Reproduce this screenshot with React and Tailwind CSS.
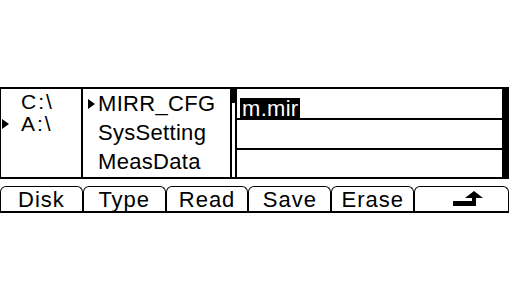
function Tri({ className }) {
  return (
    <svg className={className} width="7" height="10" viewBox="0 0 7 10">
      <path d="M0 0 L7 5 L0 10 Z" fill="currentColor" />
    </svg>
  )
}

function ReturnIcon() {
  return (
    <svg width="30" height="16" viewBox="0 0 30 16">
      <path d="M0 10 H19 V7 H23 V15 H0 Z" fill="black" />
      <path d="M12 7 L21 0 L30 7 Z" fill="black" />
    </svg>
  )
}

const softkeys = ['Disk', 'Type', 'Read', 'Save', 'Erase']

export default function App() {
  return (
    <div className="w-[509px] h-[298px] bg-white overflow-hidden text-black font-['Liberation_Sans',Arial,sans-serif]">
      <div className="pt-[87px]">
        {/* file browser panels */}
        <div className="flex h-[92px] border-t-2 border-b-2 border-l border-black border-r-[7px]">
          {/* drives */}
          <div className="w-[82px] border-r-2 border-black pt-[2px] text-[21px] leading-[22px] tracking-[2px]">
            <div className="flex items-center">
              <span className="w-[20px]" />
              <span>C:\</span>
            </div>
            <div className="flex items-center">
              <span className="w-[20px] flex pl-[1px]">
                <Tri className="text-black" />
              </span>
              <span>A:\</span>
            </div>
          </div>

          {/* folders */}
          <div className="w-[147px] text-[22px] leading-[29px] tracking-[0.3px]">
            <div className="flex items-center">
              <span className="w-[15px] flex pl-[5px]">
                <Tri />
              </span>
              <span>MIRR_CFG</span>
            </div>
            <div className="pl-[15px]">SysSetting</div>
            <div className="pl-[15px]">MeasData</div>
          </div>

          {/* scrollbar */}
          <div className="relative w-[7px] border-l-2 border-r-2 border-black">
            <div className="absolute left-0 top-0 w-full h-[14px] bg-black" />
          </div>

          {/* files */}
          <div className="flex-1 flex flex-col text-[22px] tracking-[0.3px]">
            <div className="h-[31px] border-b-2 border-black pl-[3px] pt-[3px]">
              <span className="inline-block h-[21px] bg-black text-white leading-[22px] px-[2px]">m.mir</span>
            </div>
            <div className="h-[30px] border-b-2 border-black" />
            <div className="flex-1" />
          </div>
        </div>

        {/* softkeys */}
        <div className="mt-[7px] flex h-[27px] border-b-2 border-black">
          {softkeys.map((k) => (
            <div
              key={k}
              className="flex-1 flex justify-center items-center border-t border-l border-r border-black rounded-t-[6px] text-[22px] leading-[25px] tracking-[1px]"
            >
              {k}
            </div>
          ))}
          <div className="flex-1 flex justify-center items-center border-t border-l border-r border-black rounded-t-[6px] pl-[12px]">
            <ReturnIcon />
          </div>
        </div>
      </div>
    </div>
  )
}
